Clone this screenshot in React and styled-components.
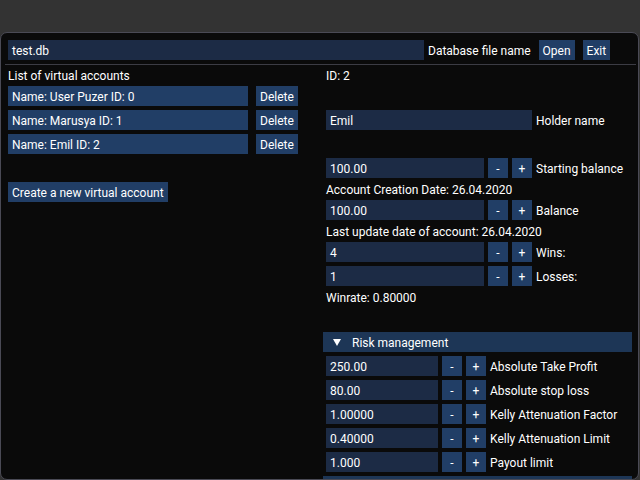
import React from "react";
import styled, { createGlobalStyle } from "styled-components";

const GlobalStyle = createGlobalStyle`
    html, body {
        margin: 0;
        padding: 0;
        background: #333333;
    }
    * {
        box-sizing: border-box;
    }
`;

const Screen = styled.div`
    width: 640px;
    height: 480px;
    padding-top: 32px;
    background: #333333;
    overflow: hidden;
    font-family: Roboto, "Liberation Sans", sans-serif;
    font-size: 12px;
    color: #ffffff;
`;

const Window = styled.div`
    width: 639px;
    height: 448px;
    background: #0a0a0a;
    border: 1px solid #4a4a55;
    border-radius: 7px;
    padding: 7px 6px 0 7px;
    overflow: hidden;
`;

const Row = styled.div`
    display: flex;
    align-items: center;
    gap: ${props => props.gap || 4}px;
    height: ${props => props.h || 20}px;
    margin-top: ${props => props.mt || 0}px;
`;

const Input = styled.div`
    width: ${props => props.w}px;
    height: 20px;
    flex: none;
    background: #1c2b45;
    padding: 1px 4px 0;
    display: flex;
    align-items: center;
    white-space: nowrap;
`;

const Button = styled.div`
    width: ${props => (props.w ? `${props.w}px` : "auto")};
    height: 20px;
    flex: none;
    background: #213e66;
    padding: 1px ${props => (props.center ? 0 : 4)}px 0;
    display: flex;
    align-items: center;
    justify-content: ${props => (props.center ? "center" : "flex-start")};
    margin-left: ${props => props.ml || 0}px;
    white-space: nowrap;
`;

const Label = styled.span`
    white-space: nowrap;
    padding-top: 1px;
    margin-left: ${props => props.ml || 0}px;
`;

const Text = styled.div`
    height: 14px;
    line-height: 16px;
    margin-top: ${props => props.mt || 0}px;
    white-space: nowrap;
`;

const Separator = styled.div`
    height: 1px;
    background: #3c3c44;
    margin: 4px -4px 3px -3px;
`;

const Columns = styled.div`
    display: flex;
`;

const LeftColumn = styled.div`
    width: 318px;
    flex: none;
    display: flex;
    flex-direction: column;
`;

const RightColumn = styled.div`
    flex: 1;
    display: flex;
    flex-direction: column;
`;

const Stack = styled.div`
    display: flex;
    flex-direction: column;
    gap: 4px;
    margin-top: ${props => props.mt || 0}px;
`;

const Header = styled.div`
    height: 20px;
    margin: ${props => props.mt || 0}px 0 0 -3px;
    width: 309px;
    flex: none;
    background: #1d3656;
    display: flex;
    align-items: center;
    padding: 1px 0 0 10px;
    gap: 11px;
`;

const Arrow = styled.span`
    width: 0;
    height: 0;
    border-left: 4px solid transparent;
    border-right: 4px solid transparent;
    border-top: 7px solid #ffffff;
`;

const accounts = [
    { name: "User Puzer", id: 0 },
    { name: "Marusya", id: 1 },
    { name: "Emil", id: 2 }
];

const Stepper = ({ value, width, label }) => (
    <Row>
        <Input w={width}>{value}</Input>
        <Button w={20} center>-</Button>
        <Button w={20} center>+</Button>
        <Label>{label}</Label>
    </Row>
);

const riskFields = [
    { value: "250.00", label: "Absolute Take Profit" },
    { value: "80.00", label: "Absolute stop loss" },
    { value: "1.00000", label: "Kelly Attenuation Factor" },
    { value: "0.40000", label: "Kelly Attenuation Limit" },
    { value: "1.000", label: "Payout limit" }
];

const App = () => (
    <>
        <GlobalStyle />
        <Screen>
            <Window>
                <Row>
                    <Input w={416}>test.db</Input>
                    <Label>Database file name</Label>
                    <Button ml={4}>Open</Button>
                    <Button ml={4}>Exit</Button>
                </Row>
                <Separator />
                <Columns>
                    <LeftColumn>
                        <Text>List of virtual accounts</Text>
                        <Stack mt={4}>
                            {accounts.map(acc => (
                                <Row key={acc.id} gap={8}>
                                    <Button w={240}>
                                        Name: {acc.name} ID: {acc.id}
                                    </Button>
                                    <Button>Delete</Button>
                                </Row>
                            ))}
                        </Stack>
                        <Row mt={28}>
                            <Button>Create a new virtual account</Button>
                        </Row>
                    </LeftColumn>
                    <RightColumn>
                        <Text>ID: 2</Text>
                        <Row mt={28}>
                            <Input w={206}>Emil</Input>
                            <Label>Holder name</Label>
                        </Row>
                        <Stack mt={28}>
                            <Stepper value="100.00" width={158} label="Starting balance" />
                            <Text>Account Creation Date: 26.04.2020</Text>
                            <Stepper value="100.00" width={158} label="Balance" />
                            <Text>Last update date of account: 26.04.2020</Text>
                            <Stepper value="4" width={158} label="Wins:" />
                            <Stepper value="1" width={158} label="Losses:" />
                            <Text>Winrate: 0.80000</Text>
                        </Stack>
                        <Header mt={28}>
                            <Arrow />
                            <span>Risk management</span>
                        </Header>
                        <Stack mt={4}>
                            {riskFields.map(f => (
                                <Stepper key={f.label} value={f.value} width={112} label={f.label} />
                            ))}
                            <Header />
                        </Stack>
                    </RightColumn>
                </Columns>
            </Window>
        </Screen>
    </>
);

export default App;
